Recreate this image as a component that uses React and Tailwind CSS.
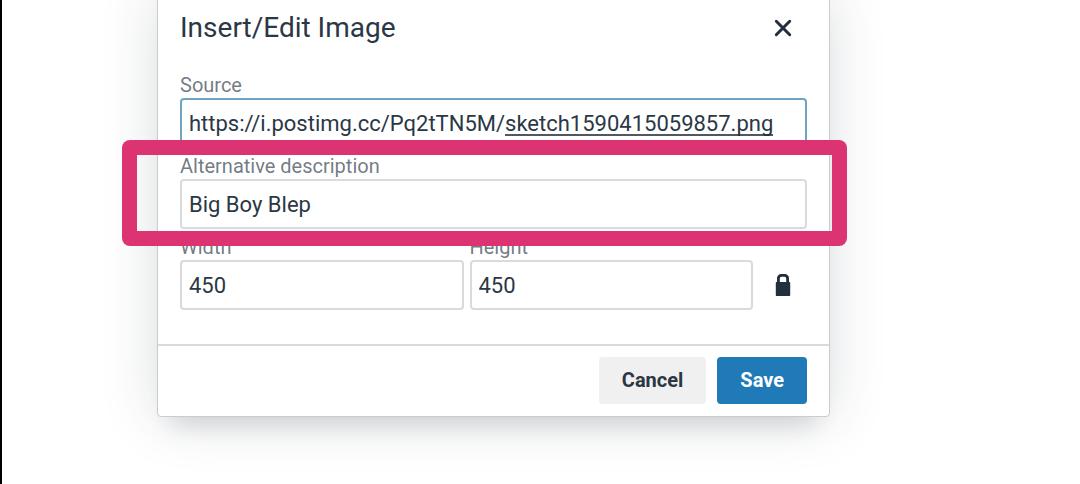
import { useState } from 'react';

const inputBase =
  'block w-full h-[50px] px-[7px] rounded-[4px] border-2 bg-white text-[22px] leading-7 text-[#2b3745] outline-none';

function Field({ id, label, value, onChange, focused = false, className = '', children }) {
  return (
    <div className={`relative ${className}`}>
      <label htmlFor={id} className="block h-[26px] text-[20px] leading-[26px] text-[#222f3e]/65 whitespace-nowrap">
        {label}
      </label>
      <input
        id={id}
        type="text"
        spellCheck={false}
        value={value}
        onChange={(e) => onChange(e.target.value)}
        className={`${inputBase} ${focused ? 'border-[#6fa3c4]' : 'border-[#dadada]'}`}
      />
      {children}
    </div>
  );
}

function CloseIcon() {
  return (
    <svg width="18" height="18" viewBox="0 0 18 18" fill="none" stroke="#222f3e" strokeWidth="3" strokeLinecap="round">
      <path d="M2.300 2.300l13.400 13.400M15.700 2.300L2.300 15.700" />
    </svg>
  );
}

function LockIcon() {
  return (
    <svg width="16" height="22" viewBox="0 0 16 22" fill="#222f3e">
      <path
        fillRule="evenodd"
        d="M6.200 0h3.600A4.200 4.200 0 0 1 14 4.200V8h.2c.6 0 1 .4 1 1v12c0 .6-.4 1-1 1H1.800c-.6 0-1-.4-1-1V9c0-.6.4-1 1-1H2V4.200A4.200 4.200 0 0 1 6.200 0zm.4 2.700A1.800 1.800 0 0 0 4.800 4.500V8h6.400V4.500a1.800 1.800 0 0 0-1.800-1.800z"
      />
    </svg>
  );
}

export default function App() {
  const [form, setForm] = useState({
    source: 'https://i.postimg.cc/Pq2tTN5M/sketch1590415059857.png',
    alt:    'Big Boy Blep',
    width:  '450',
    height: '450',
  });

  const set = (key) => (value) => setForm((f) => ({ ...f, [key]: value }));

  return (
    <main className="min-h-screen overflow-hidden bg-white border-l-2 border-black pl-[155px] font-['Roboto',sans-serif]">
      <form
        role="dialog"
        aria-labelledby="dialog-title"
        onSubmit={(e) => e.preventDefault()}
        className="-mt-2 w-full max-w-[673px] rounded-[4px] border border-[#cccccc] bg-white shadow-[0_22px_22px_-14px_rgba(34,47,62,0.15),0_0_56px_1px_rgba(34,47,62,0.15)]"
      >
        <header className="flex items-center justify-between h-[69px] px-[22px]">
          <h1 id="dialog-title" className="text-[28px] leading-9 text-[#2b3745]">Insert/Edit Image</h1>
          <button type="button" aria-label="Close" className="flex items-center justify-center w-12 h-12">
            <CloseIcon />
          </button>
        </header>

        <div className="flex flex-col gap-[5px] px-[22px] pt-[10px] pb-[34px]">
          <Field id="source" label="Source" value={form.source} onChange={set('source')} focused>
            {/* keyboard composition underline */}
            <span className="absolute left-[325px] bottom-3 w-[268px] h-[2px] bg-[#222f3e]/80" />
          </Field>

          <Field id="alt" label="Alternative description" value={form.alt} onChange={set('alt')}>
            {/* marker frame around the field */}
            <div className="absolute z-10 -left-[58px] -right-10 -top-[13px] -bottom-[17px] rounded-[8px] bg-[#dc3472] p-[15px] pointer-events-none [clip-path:polygon(evenodd,0_0,100%_0,100%_100%,0_100%,0_0,15px_15px,calc(100%-15px)_15px,calc(100%-15px)calc(100%-15px),15px_calc(100%-15px),15px_15px)]" />
          </Field>

          <div className="flex items-end gap-[6px]">
            <Field id="width" label="Width" value={form.width} onChange={set('width')} className="flex-1" />
            <Field id="height" label="Height" value={form.height} onChange={set('height')} className="flex-1" />
            <button type="button" aria-label="Constrain proportions" className="flex items-center justify-center w-12 h-[50px]">
              <LockIcon />
            </button>
          </div>
        </div>

        <footer className="flex justify-end gap-[11px] px-[22px] pt-[11px] pb-3 border-t-2 border-[#dadada]">
          <button type="button" className="h-[47px] px-[23px] pb-[2px] rounded-[4px] bg-[#f0f0f0] text-[20px] leading-6 font-bold text-[#2b3745]">
            Cancel
          </button>
          <button type="submit" className="h-[47px] px-[23px] pb-[2px] rounded-[4px] bg-[#207ab7] text-[20px] leading-6 font-bold text-white">
            Save
          </button>
        </footer>
      </form>
    </main>
  );
}
